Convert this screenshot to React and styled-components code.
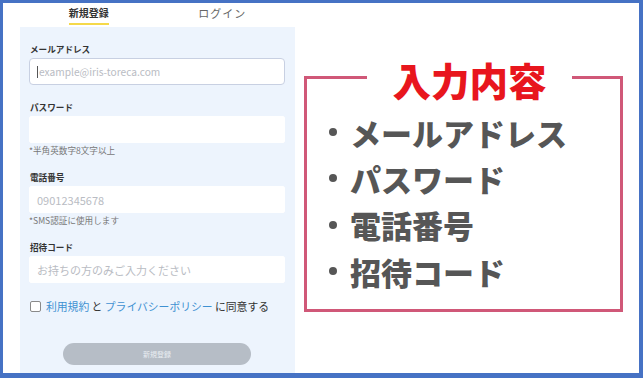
import React from "react";
import styled, { createGlobalStyle } from "styled-components";

const Global = createGlobalStyle`
  html, body { margin: 0; padding: 0; background: #ffffff; }
  * { box-sizing: border-box; }
`;

const JP = `"Noto Sans CJK JP", "Noto Sans", sans-serif`;

const Frame = styled.div`
  width: 643px;
  height: 378px;
  border-style: solid;
  border-color: #4672c4;
  border-width: 3px 4px 5px 3px;
  background: #ffffff;
  display: flex;
  align-items: flex-start;
  font-family: ${JP};
`;

const LeftCol = styled.div`
  margin-left: 17px;
  width: 275px;
  height: 100%;
  display: flex;
  flex-direction: column;
`;

const Tabs = styled.div`
  height: 24px;
  display: flex;
`;

const Tab = styled.div`
  flex: 1;
  display: flex;
  justify-content: center;
`;

const TabLabel = styled.span`
  height: 22px;
  padding-top: 1px;
  font-size: ${(p) => (p.$active ? "10px" : "11px")};
  line-height: 18px;
  font-weight: ${(p) => (p.$active ? 700 : 400)};
  color: ${(p) => (p.$active ? "#333333" : "#666666")};
  letter-spacing: ${(p) => (p.$active ? "0" : "1px")};
  margin-right: ${(p) => (p.$active ? "0" : "8px")};
  border-bottom: 2px solid ${(p) => (p.$active ? "#f5d94a" : "transparent")};
`;

const Panel = styled.div`
  flex: 1;
  background: #edf4fd;
  padding: 16px 10px 0 9px;
  display: flex;
  flex-direction: column;
`;

const Group = styled.div`
  display: flex;
  flex-direction: column;
  margin-top: ${(p) => (p.$first ? "0" : "16px")};
`;

const Label = styled.div`
  padding-left: 1px;
  font-size: 8.6px;
  line-height: 12px;
  font-weight: 700;
  color: #333333;
  margin-bottom: 3px;
`;

const Field = styled.div`
  height: 27px;
  background: #ffffff;
  border: 1px solid ${(p) => (p.$focused ? "#c8d0e2" : "#ffffff")};
  border-radius: ${(p) => (p.$focused ? "4px" : "2px")};
  display: flex;
  align-items: center;
  padding-left: 7px;
  font-size: ${(p) => p.$size || "11px"};
  color: #b9bcc3;
`;

const Caret = styled.span`
  width: 1px;
  height: 12px;
  background: #555555;
  margin-right: 1px;
`;

const Hint = styled.div`
  margin-top: 2px;
  font-size: 8.6px;
  line-height: 10px;
  color: #777777;
`;

const AgreeRow = styled.div`
  margin-top: 16px;
  height: 14px;
  display: flex;
  align-items: center;
  padding-left: 1px;
  font-size: 10.8px;
  color: #333333;
  white-space: pre;
`;

const Check = styled.span`
  width: 11px;
  height: 11px;
  border: 1px solid #8a8a8a;
  border-radius: 2px;
  background: #ffffff;
  margin-right: 5px;
`;

const Link = styled.span`
  color: #3f91d2;
`;

const Submit = styled.div`
  margin: 30px auto 0;
  width: 188px;
  height: 22px;
  border-radius: 11px;
  background: #b6bdc6;
  color: #e9edf2;
  font-size: 7px;
  display: flex;
  align-items: center;
  justify-content: center;
`;

const Box = styled.fieldset`
  margin: 52px 0 0 9px;
  width: 319px;
  border: 3px solid #d05878;
  padding: 0 10px 15px 22px;
  min-width: 0;
`;

const Title = styled.legend`
  margin: 0 auto;
  padding: 4px 25px 0;
  font-size: 38.5px;
  line-height: 40px;
  font-weight: 900;
  color: #e8161d;
`;

const List = styled.ul`
  list-style: none;
  margin: 0;
  padding: 10px 0 0;
`;

const Item = styled.li`
  display: flex;
  align-items: center;
  height: 46.3px;
  font-size: 31px;
  font-weight: 900;
  color: #565656;
`;

const Dot = styled.span`
  width: 8px;
  height: 8px;
  border-radius: 50%;
  background: #565656;
  margin-right: 13px;
  flex-shrink: 0;
`;

const items = ["メールアドレス", "パスワード", "電話番号", "招待コード"];

export default function App() {
  return (
    <>
      <Global />
      <Frame>
        <LeftCol>
          <Tabs>
            <Tab>
              <TabLabel $active>新規登録</TabLabel>
            </Tab>
            <Tab>
              <TabLabel>ログイン</TabLabel>
            </Tab>
          </Tabs>
          <Panel>
            <Group $first>
              <Label>メールアドレス</Label>
              <Field $focused $size="10.2px">
                <Caret />
                example@iris-toreca.com
              </Field>
            </Group>
            <Group>
              <Label>パスワード</Label>
              <Field />
              <Hint>*半角英数字8文字以上</Hint>
            </Group>
            <Group>
              <Label>電話番号</Label>
              <Field>09012345678</Field>
              <Hint>*SMS認証に使用します</Hint>
            </Group>
            <Group>
              <Label>招待コード</Label>
              <Field>お持ちの方のみご入力ください</Field>
            </Group>
            <AgreeRow>
              <Check />
              <Link>利用規約</Link>{" と "}
              <Link>プライバシーポリシー</Link>{" に同意する"}
            </AgreeRow>
            <Submit>新規登録</Submit>
          </Panel>
        </LeftCol>
        <Box>
          <Title>入力内容</Title>
          <List>
            {items.map((t) => (
              <Item key={t}>
                <Dot />
                {t}
              </Item>
            ))}
          </List>
        </Box>
      </Frame>
    </>
  );
}
